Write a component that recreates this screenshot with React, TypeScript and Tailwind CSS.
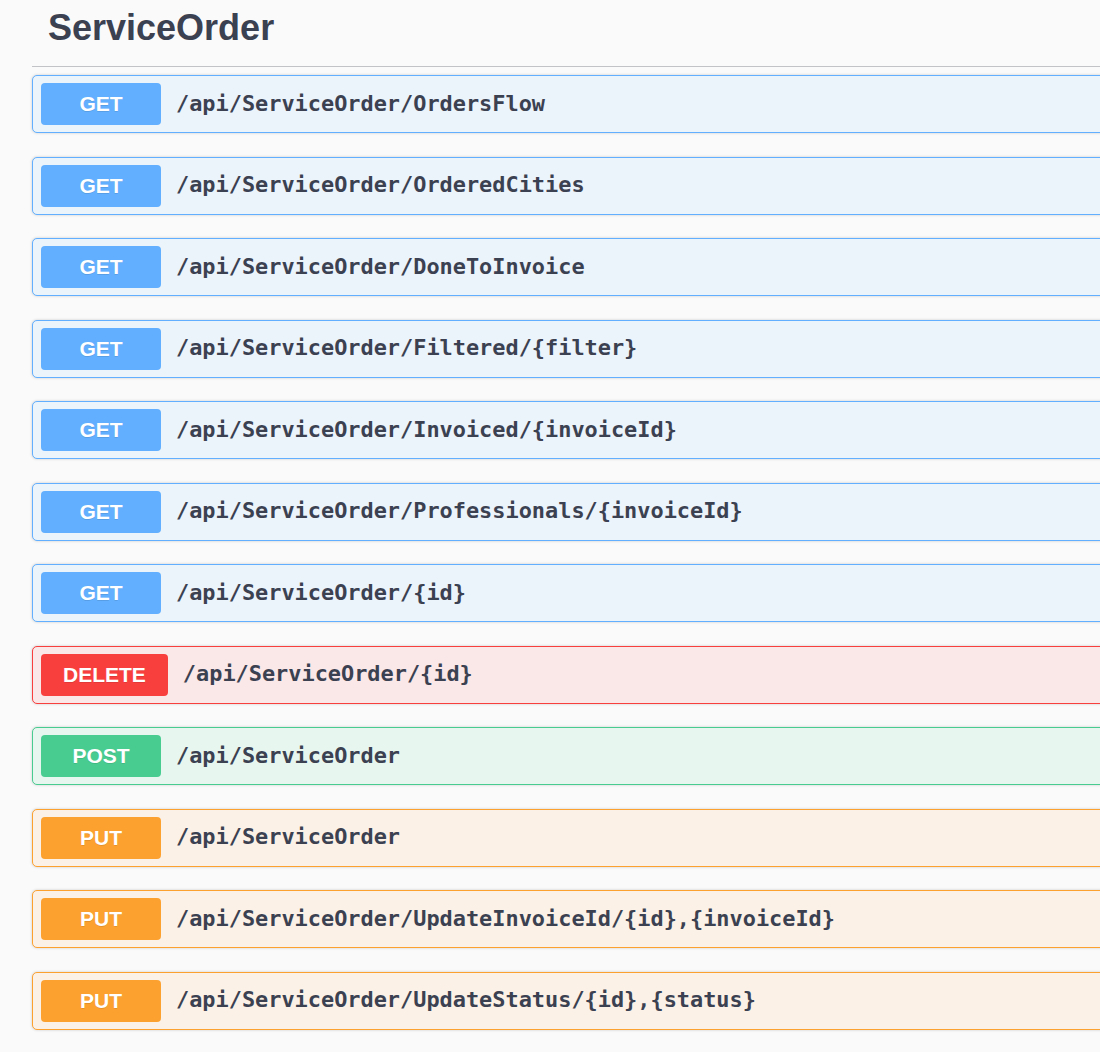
import React from "react";

type Method = "GET" | "DELETE" | "POST" | "PUT";

const styles: Record<Method, { row: string; badge: string }> = {
  GET: { row: "bg-[#ebf3fb] border-[#61affe]", badge: "bg-[#61affe]" },
  DELETE: { row: "bg-[#fae7e7] border-[#f93e3e]", badge: "bg-[#f93e3e]" },
  POST: { row: "bg-[#e8f6f0] border-[#49cc90]", badge: "bg-[#49cc90]" },
  PUT: { row: "bg-[#fbf1e6] border-[#fca130]", badge: "bg-[#fca130]" },
};

const endpoints: { method: Method; path: string }[] = [
  { method: "GET", path: "/api/ServiceOrder/OrdersFlow" },
  { method: "GET", path: "/api/ServiceOrder/OrderedCities" },
  { method: "GET", path: "/api/ServiceOrder/DoneToInvoice" },
  { method: "GET", path: "/api/ServiceOrder/Filtered/{filter}" },
  { method: "GET", path: "/api/ServiceOrder/Invoiced/{invoiceId}" },
  { method: "GET", path: "/api/ServiceOrder/Professionals/{invoiceId}" },
  { method: "GET", path: "/api/ServiceOrder/{id}" },
  { method: "DELETE", path: "/api/ServiceOrder/{id}" },
  { method: "POST", path: "/api/ServiceOrder" },
  { method: "PUT", path: "/api/ServiceOrder" },
  { method: "PUT", path: "/api/ServiceOrder/UpdateInvoiceId/{id},{invoiceId}" },
  { method: "PUT", path: "/api/ServiceOrder/UpdateStatus/{id},{status}" },
];

const Operation: React.FC<{ method: Method; path: string }> = ({ method, path }) => {
  const s = styles[method];
  return (
    <div
      className={`flex items-center h-[58px] mb-[23.5px] px-[8px] border rounded-[5px] shadow-[0_0_3px_rgba(0,0,0,0.19)] ${s.row}`}
    >
      <span
        className={`flex items-center justify-center h-[42px] min-w-[120px] px-[22px] rounded-[4px] text-white text-[21px] font-bold font-['Liberation_Sans',Arial,sans-serif] [text-shadow:0_1px_0_rgba(0,0,0,0.1)] ${s.badge}`}
      >
        {method}
      </span>
      <span className="pl-[15px] text-[21.9px] font-bold text-[#3b4151] font-['DejaVu_Sans_Mono',monospace] whitespace-nowrap">
        {path}
      </span>
    </div>
  );
};

export default function App() {
  return (
    <div className="w-full min-h-[1052px] bg-[#fafafa] overflow-hidden">
      <div className="ml-[32px] w-[1120px]">
        <h3 className="pt-[6px] pb-[17px] pl-[16px] leading-[43px] text-[36px] font-bold text-[#3b4151] font-['Liberation_Sans',Arial,sans-serif] border-b border-[#c1c3c7]">
          ServiceOrder
        </h3>
        <div className="mt-[8px]">
          {endpoints.map((e, i) => (
            <Operation key={i} method={e.method} path={e.path} />
          ))}
        </div>
      </div>
    </div>
  );
}
